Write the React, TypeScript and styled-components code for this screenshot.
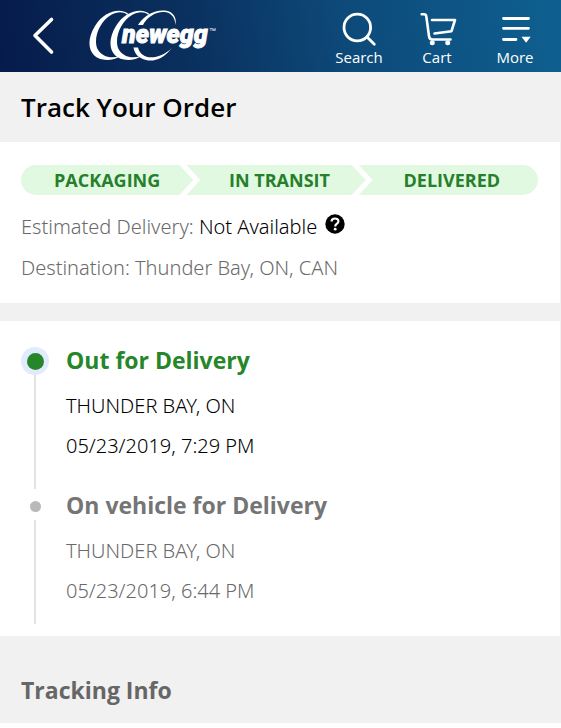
import React from "react";
import styled, { createGlobalStyle } from "styled-components";

const GlobalStyle = createGlobalStyle`
  * { box-sizing: border-box; }
  body {
    margin: 0;
    background: #fff;
    color: #000;
    font-family: "Open Sans", "Noto Sans", sans-serif;
  }
`;

const Page = styled.div`
  border-right: 1px solid #f1f1f1;
`;

const Header = styled.header`
  display: flex;
  align-items: center;
  height: 72px;
  margin-right: -1px;
  padding: 0 7px 0 20px;
  background: linear-gradient(80deg, #061b4b 0%, #0a315f 35%, #0d4a7a 62%, #0e6090 100%);
`;

const IconButton = styled.button`
  display: flex;
  padding: 0;
  border: 0;
  background: none;
  color: #fff;
  cursor: pointer;
`;

const LogoLink = styled.a`
  display: flex;
  margin-left: 20px;
`;

const Nav = styled.nav`
  display: flex;
  margin-left: auto;
`;

const NavButton = styled.button`
  display: flex;
  flex-direction: column;
  align-items: center;
  width: 78px;
  padding: 0 0 2px;
  border: 0;
  background: none;
  color: #fff;
  font-family: inherit;
  font-size: 15px;
  line-height: 18px;
  cursor: pointer;
`;

const TitleBar = styled.div`
  padding: 18px 21px;
  background: #f1f1f1;
`;

const Title = styled.h1`
  margin: 0;
  font-size: 26px;
  font-weight: 600;
  line-height: 34px;
`;

const Summary = styled.section`
  padding: 23px 21px 15px;
  border-bottom: 18px solid #f1f1f1;
`;

const Steps = styled.ol`
  display: grid;
  grid-template-columns: repeat(3, 1fr);
  margin: 0 1px 11px 0;
  padding: 0;
  list-style: none;
  border-radius: 15px;
  overflow: hidden;
`;

const Step = styled.li<{ $first?: boolean; $last?: boolean }>`
  margin-left: ${(p) => (p.$first ? "0" : "-7px")};
  padding-left: ${(p) => (p.$first ? "0" : "7px")};
  background: #e1f9e1;
  color: #267f2a;
  font-size: 18px;
  font-weight: 700;
  line-height: 30px;
  text-align: center;
  clip-path: polygon(
    0 0,
    ${(p) => (p.$last ? "100%" : "calc(100% - 14px)")} 0,
    100% 50%,
    ${(p) => (p.$last ? "100%" : "calc(100% - 14px)")} 100%,
    0 100%,
    ${(p) => (p.$first ? "0" : "14px")} 50%
  );
`;

const Fact = styled.p`
  display: flex;
  align-items: center;
  margin: 0;
  color: #6a6a6a;
  font-family: "Noto Sans", "Open Sans", sans-serif;
  font-size: 20px;
  font-weight: 300;
  line-height: 41px;
  white-space: pre;
`;

const Value = styled.span`
  color: #000;
`;

const HelpButton = styled(IconButton)`
  margin: 0 0 5px 8px;
`;

const Timeline = styled.ol`
  display: flex;
  flex-direction: column;
  gap: 3px;
  margin: 0;
  padding: 26px 21px 12px;
  list-style: none;
`;

const Event = styled.li`
  display: flex;
  gap: 17px;
`;

const Track = styled.div`
  display: flex;
  flex-direction: column;
  align-items: center;
  width: 28px;

  &::after {
    content: "";
    flex: 1;
    width: 2px;
    background: #e2e2e2;
  }
`;

const Marker = styled.span<{ $current?: boolean }>`
  display: grid;
  place-items: center;
  width: 28px;
  height: 28px;
  border-radius: 50%;
  background: ${(p) => (p.$current ? "#e2ebfd" : "#fff")};

  &::before {
    content: "";
    width: ${(p) => (p.$current ? 17 : 11)}px;
    height: ${(p) => (p.$current ? 17 : 11)}px;
    border-radius: 50%;
    background: ${(p) => (p.$current ? "#26862a" : "#b9b9b9")};
  }
`;

const Details = styled.div<{ $current?: boolean }>`
  padding-bottom: ${(p) => (p.$current ? 23 : 13)}px;
  color: ${(p) => (p.$current ? "#000" : "#6a6a6a")};
`;

const EventTitle = styled.h2<{ $current?: boolean }>`
  margin: 0 0 13px;
  color: ${(p) => (p.$current ? "#26862a" : "#757575")};
  font-size: 23px;
  font-weight: 700;
  line-height: 26px;
`;

const EventLine = styled.p`
  margin: 0;
  font-family: "Noto Sans", "Open Sans", sans-serif;
  font-size: 20px;
  font-weight: 300;
  line-height: 40px;
`;

const InfoBar = styled.section`
  padding: 38px 21px 17px;
  background: #f1f1f1;
`;

const InfoTitle = styled.h2`
  margin: 0;
  color: #666;
  font-size: 23px;
  font-weight: 700;
  line-height: 32px;
`;

const events = [
  { title: "Out for Delivery", place: "THUNDER BAY, ON", time: "05/23/2019, 7:29 PM", current: true },
  { title: "On vehicle for Delivery", place: "THUNDER BAY, ON", time: "05/23/2019, 6:44 PM", current: false },
];

function BackIcon() {
  return (
    <svg width="44" height="48" viewBox="0 0 44 48" fill="none" stroke="currentColor" strokeWidth="3.6" strokeLinecap="round" strokeLinejoin="round" aria-hidden="true">
      <path d="M31.5 7.5 15 23.5l16.5 16.5" />
    </svg>
  );
}

function Logo() {
  return (
    <svg width="134" height="56" viewBox="84 8 134 56" fill="#fff" role="img" aria-label="newegg">
      <path d="M129 14.5C121 7 104 11 95 26C84 44 90 60 107 60C112 60 117 58.5 120 56C111 59 102 57 97.5 49C93 39 99 22 111 15C117 11.5 123 11.5 127 14.5Z" />
      <path d="M150 14.5C142 7 125 11 116 26C105 44 111 60 128 60C133 60 138 58.5 141 56C132 59 123 57 118.5 49C114 39 120 22 132 15C138 11.5 144 11.5 148 14.5Z" />
      <path d="M138 25C144 15 155 9.5 165 10.5C173 11.5 177 17 175.5 25C175 17 171 12.5 164 12C156 11.5 147 17 143 25Z" />
      <path d="M133.5 47.5H138C141 60 158 61 172 48C163 59 154 62 146 60C139 58.5 134.5 54 133.5 47.5Z" />
      <text x="122" y="43" fontFamily="Roboto, sans-serif" fontSize="25" fontWeight="900" fontStyle="italic" stroke="#fff" strokeWidth="0.9">newegg</text>
      <text x="209" y="33" fontFamily='"Liberation Sans", sans-serif' fontSize="7">™</text>
    </svg>
  );
}

function SearchIcon() {
  return (
    <svg width="40" height="43" viewBox="0 0 40 43" fill="none" stroke="currentColor" strokeWidth="2.8" strokeLinecap="round" aria-hidden="true">
      <circle cx="18.3" cy="22.5" r="13.3" />
      <path d="M28 32l7.3 7.3" />
    </svg>
  );
}

function CartIcon() {
  return (
    <svg width="40" height="43" viewBox="0 0 40 43" fill="none" stroke="currentColor" strokeWidth="2.6" strokeLinecap="round" strokeLinejoin="round" aria-hidden="true">
      <path d="M4.7 9.2H7q2 0 2.3 2.2L12 31q.4 3.5 3.2 3.5H33.5" />
      <path d="M15 15H38L34.5 26.2 17.5 28.5" />
      <circle cx="15.3" cy="37.8" r="2.5" fill="currentColor" stroke="none" />
      <circle cx="30.7" cy="37.8" r="2.5" fill="currentColor" stroke="none" />
    </svg>
  );
}

function MoreIcon() {
  return (
    <svg width="40" height="43" viewBox="0 0 40 43" fill="none" stroke="currentColor" strokeWidth="2.8" strokeLinecap="round" aria-hidden="true">
      <path d="M8.500 13.500h25M8.500 23.300h25M8.500 34.500h12.500" />
      <path d="M26.500 31.700h9.200L31.100 37.800z" fill="currentColor" stroke="none" />
    </svg>
  );
}

function HelpIcon() {
  return (
    <svg width="20" height="20" viewBox="0 0 20 20" aria-hidden="true">
      <circle cx="10" cy="10" r="9.7" fill="#000" />
      <path d="M6.6 7.5C6.6 3.5 13.4 3.5 13.4 7.4C13.4 9.7 10.2 9.7 10.2 12.5" fill="none" stroke="#fff" strokeWidth="2.2" />
      <circle cx="10.2" cy="15.2" r="1.4" fill="#fff" />
    </svg>
  );
}

export default function App() {
  return (
    <Page>
      <GlobalStyle />
      <Header>
        <IconButton type="button" aria-label="Back"><BackIcon /></IconButton>
        <LogoLink href="#"><Logo /></LogoLink>
        <Nav>
          <NavButton type="button"><SearchIcon />Search</NavButton>
          <NavButton type="button"><CartIcon />Cart</NavButton>
          <NavButton type="button"><MoreIcon />More</NavButton>
        </Nav>
      </Header>
      <main>
        <TitleBar><Title>Track Your Order</Title></TitleBar>
        <Summary>
          <Steps>
            <Step $first>PACKAGING</Step>
            <Step>IN TRANSIT</Step>
            <Step $last>DELIVERED</Step>
          </Steps>
          <Fact>
            {"Estimated Delivery: "}<Value>Not Available</Value>
            <HelpButton type="button" aria-label="Delivery help"><HelpIcon /></HelpButton>
          </Fact>
          <Fact>Destination: Thunder Bay, ON, CAN</Fact>
        </Summary>
        <Timeline>
          {events.map((e) => (
            <Event key={e.title}>
              <Track><Marker $current={e.current} /></Track>
              <Details $current={e.current}>
                <EventTitle $current={e.current}>{e.title}</EventTitle>
                <EventLine>{e.place}</EventLine>
                <EventLine>{e.time}</EventLine>
              </Details>
            </Event>
          ))}
        </Timeline>
        <InfoBar><InfoTitle>Tracking Info</InfoTitle></InfoBar>
      </main>
    </Page>
  );
}
